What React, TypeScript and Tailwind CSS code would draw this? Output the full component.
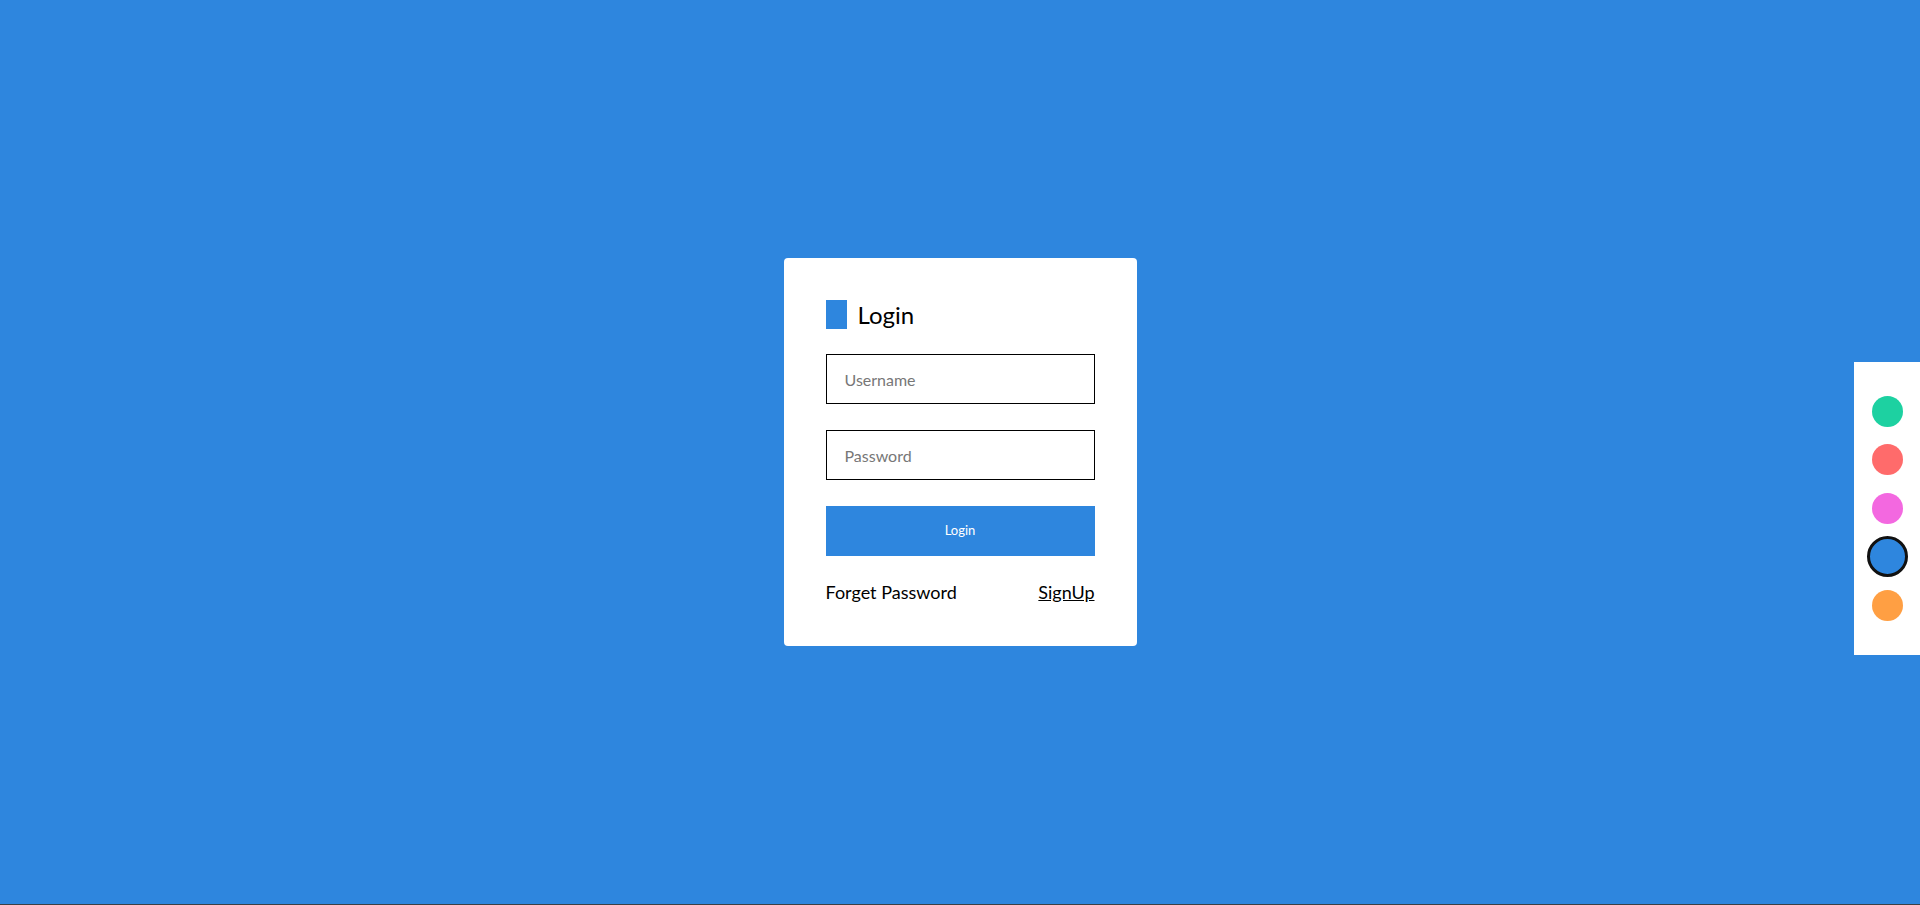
import { useState } from 'react';

const swatches = ['#1dd1a1', '#ff6b6b', '#f368e0', '#2e86de', '#ff9f43'];

export default function App() {
  const [theme, setTheme] = useState('#2e86de');

  return (
    <div className="relative w-full h-[905px] overflow-hidden font-['Lato',sans-serif]">
      <div
        className="flex h-[904px] w-full items-center justify-center"
        style={{ backgroundColor: theme }}
      >
        {/* Login card */}
        <div className="w-[353px] rounded-[4px] bg-white px-[42px] pt-[42px] pb-[43px]">
          <div className="flex h-[29px] items-center gap-[11px]">
            <span className="block h-[29px] w-[21px]" style={{ backgroundColor: theme }} />
            <h1 className="text-[24px] leading-[29px] text-black">Login</h1>
          </div>

          <input
            type="text"
            placeholder="Username"
            className="mt-[25px] block h-[50px] w-full border border-black px-[18px] text-[16px] text-black outline-none placeholder:text-[#777]"
          />
          <input
            type="password"
            placeholder="Password"
            className="mt-[26px] block h-[50px] w-full border border-black px-[18px] text-[16px] text-black outline-none placeholder:text-[#777]"
          />
          <button
            className="mt-[26px] block h-[50px] w-full text-[13px] text-white"
            style={{ backgroundColor: theme }}
          >
            Login
          </button>

          <div className="mt-[25px] flex items-center justify-between text-[18px] leading-[22px] text-black">
            <a href="#">Forget Password</a>
            <a href="#" className="underline">
              SignUp
            </a>
          </div>
        </div>
      </div>
      <div className="h-px w-full bg-[#3b4045]" />

      {/* Colour picker */}
      <div className="absolute right-0 top-[362px] flex w-[66px] flex-col bg-white py-[25px]">
        {swatches.map((c) => (
          <button
            key={c}
            onClick={() => setTheme(c)}
            className="flex h-[48.5px] w-full items-center justify-center"
          >
            <span
              className={
                c === theme
                  ? 'block h-[41px] w-[41px] rounded-full border-[3px] border-[#111]'
                  : 'block h-[31px] w-[31px] rounded-full'
              }
              style={{ backgroundColor: c }}
            />
          </button>
        ))}
      </div>
    </div>
  );
}
